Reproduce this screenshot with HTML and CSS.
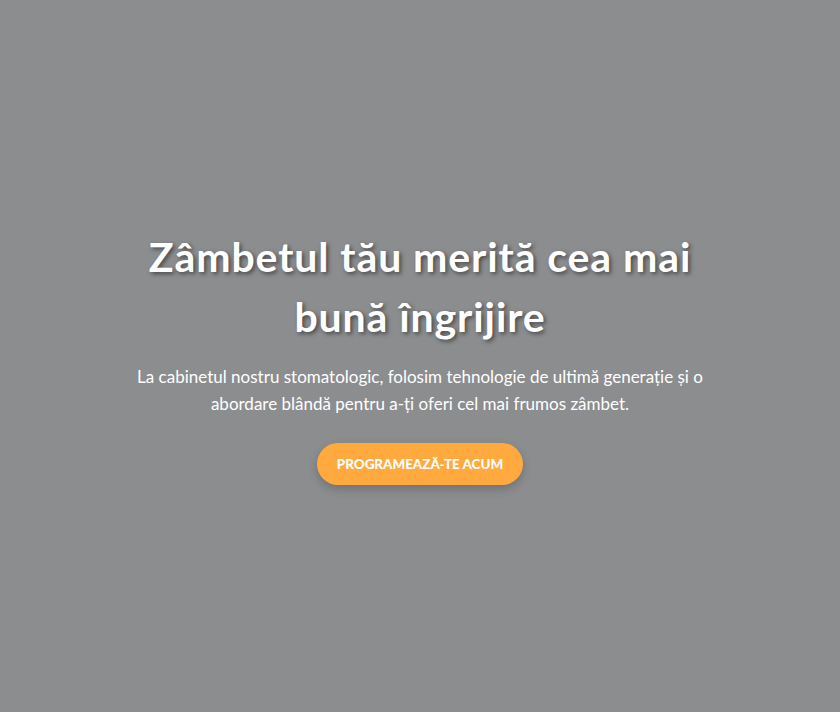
FILE: index.html
```html
<!DOCTYPE html>
<html lang="ro">
<head>
<meta charset="utf-8">
<title>Cabinet stomatologic</title>
<link rel="stylesheet" href="styles.css">
</head>
<body>
<section class="hero">
  <div class="hero-content">
    <h1 class="hero-title">Zâmbetul tău merită cea mai bună îngrijire</h1>
    <p class="hero-text">La cabinetul nostru stomatologic, folosim tehnologie de ultimă generație și o abordare blândă pentru a-ți oferi cel mai frumos zâmbet.</p>
    <a class="hero-btn" href="#">Programează-te acum</a>
  </div>
</section>
</body>
</html>
```
FILE: styles.css
```css
* { box-sizing: border-box; }
html, body { margin: 0; padding: 0; }
body {
  font-family: "Lato", "Noto Sans", sans-serif;
  background: #8c8d8f;
  color: #fff;
}
.hero {
  min-height: 100vh;
  display: flex;
  align-items: center;
  justify-content: center;
  text-align: center;
  padding: 0 20px;
}
.hero-content {
  max-width: 600px;
}
.hero-title {
  font-size: 41px;
  font-weight: 700;
  letter-spacing: 0.9px;
  line-height: 60px;
  margin: 0 0 17px;
  text-shadow: 2px 2px 4px rgba(0, 0, 0, 0.5);
}
.hero-text {
  font-size: 17px;
  line-height: 26.4px;
  margin: 0 0 26px;
}
.hero-btn {
  display: inline-block;
  background: #ffa93f;
  color: #fff;
  text-decoration: none;
  text-transform: uppercase;
  font-weight: 900;
  font-size: 13.4px;
  line-height: 20px;
  padding: 11px 20px;
  border-radius: 30px;
  box-shadow: 0 4px 10px rgba(0, 0, 0, 0.2);
}
```
